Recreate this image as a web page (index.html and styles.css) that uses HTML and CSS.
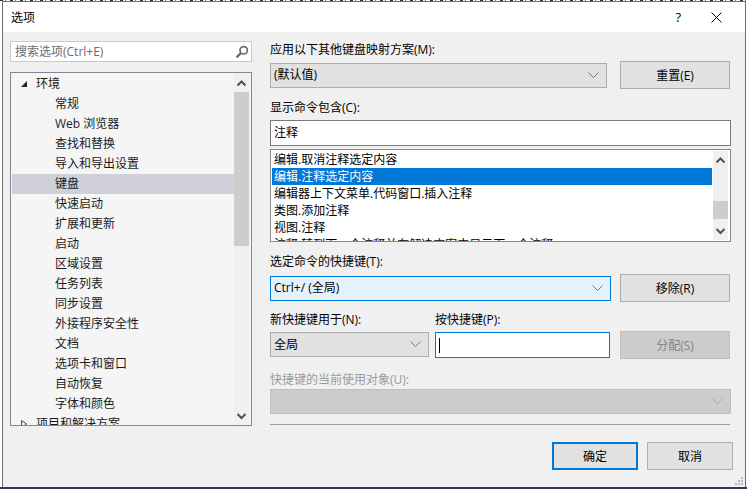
FILE: index.html
```html
<!DOCTYPE html>
<html lang="zh-CN">
<head>
<meta charset="utf-8">
<title>选项</title>
<link rel="stylesheet" href="styles.css">
</head>
<body>
<div class="desktop">
  <div class="dialog">
    <header class="titlebar">
      <span class="title">选项</span>
      <span class="help">?</span>
      <svg class="close" width="11" height="11" viewBox="0 0 11 11"><path d="M.5.5l10 10M10.5.5l-10 10" stroke="#000" fill="none"/></svg>
    </header>
    <div class="content">
      <aside class="side">
        <div class="search">
          <span class="search-text">搜索选项(Ctrl+E)</span>
          <svg class="search-icon" width="14" height="14" viewBox="0 0 14 14"><circle cx="8.7" cy="5.3" r="3.7" fill="none" stroke="#6a6a6a" stroke-width="1.7"/><path d="M6 8L1.6 12.4" stroke="#6a6a6a" stroke-width="2.4" fill="none"/></svg>
        </div>
        <div class="tree">
          <ul class="tree-list">
            <li class="node parent"><svg class="twist" width="6" height="6" viewBox="0 0 6 6"><path d="M6 0v6H0z" fill="#222"/></svg>环境</li>
            <li class="node">常规</li>
            <li class="node">Web 浏览器</li>
            <li class="node">查找和替换</li>
            <li class="node">导入和导出设置</li>
            <li class="node selected">键盘</li>
            <li class="node">快速启动</li>
            <li class="node">扩展和更新</li>
            <li class="node">启动</li>
            <li class="node">区域设置</li>
            <li class="node">任务列表</li>
            <li class="node">同步设置</li>
            <li class="node">外接程序安全性</li>
            <li class="node">文档</li>
            <li class="node">选项卡和窗口</li>
            <li class="node">自动恢复</li>
            <li class="node">字体和颜色</li>
            <li class="node parent"><svg class="twist" width="6" height="8" viewBox="0 0 6 8"><path d="M.5.5l5 3.5-5 3.500z" fill="none" stroke="#444"/></svg>项目和解决方案</li>
          </ul>
          <div class="scrollbar tree-scroll">
            <svg class="arrow" width="15" height="18" viewBox="0 0 15 18"><path d="M3.500 11.500l4-4 4 4" fill="none" stroke="#505050" stroke-width="2"/></svg>
            <div class="thumb tree-thumb"></div>
            <div class="track"></div>
            <svg class="arrow" width="15" height="18" viewBox="0 0 15 18"><path d="M3.500 7l4 4 4-4" fill="none" stroke="#505050" stroke-width="2"/></svg>
          </div>
        </div>
      </aside>
      <main class="panel">
        <label class="label first">应用以下其他键盘映射方案(M):</label>
        <div class="row">
          <div class="combo grow">(默认值)<svg class="chev" width="11" height="6" viewBox="0 0 11 6"><path d="M.5.500l5 5 5-5" fill="none" stroke="#777"/></svg></div>
          <button class="btn action">重置(E)</button>
        </div>
        <label class="label second">显示命令包含(C):</label>
        <div class="textbox">注释</div>
        <div class="cmdlist">
          <ul class="cmd-rows">
            <li class="cmd">编辑.取消注释选定内容</li>
            <li class="cmd active">编辑.注释选定内容</li>
            <li class="cmd">编辑器上下文菜单.代码窗口.插入注释</li>
            <li class="cmd">类图.添加注释</li>
            <li class="cmd">视图.注释</li>
            <li class="cmd">注释.转到下一个注释并在解决方案中显示下一个注释</li>
          </ul>
          <div class="scrollbar list-scroll">
            <svg class="arrow" width="15" height="18" viewBox="0 0 15 18"><path d="M3.500 11.500l4-4 4 4" fill="none" stroke="#505050" stroke-width="2"/></svg>
            <div class="track upper"></div>
            <div class="thumb list-thumb"></div>
            <div class="track"></div>
            <svg class="arrow" width="15" height="18" viewBox="0 0 15 18"><path d="M3.500 7l4 4 4-4" fill="none" stroke="#505050" stroke-width="2"/></svg>
          </div>
        </div>
        <label class="label third">选定命令的快捷键(T):</label>
        <div class="row">
          <div class="combo grow focus">Ctrl+/ (全局)<svg class="chev" width="11" height="6" viewBox="0 0 11 6"><path d="M.5.500l5 5 5-5" fill="none" stroke="#777"/></svg></div>
          <button class="btn action">移除(R)</button>
        </div>
        <div class="fields">
          <div class="field scope">
            <label class="label">新快捷键用于(N):</label>
            <div class="combo">全局<svg class="chev" width="11" height="6" viewBox="0 0 11 6"><path d="M.5.500l5 5 5-5" fill="none" stroke="#777"/></svg></div>
          </div>
          <div class="field keys">
            <label class="label">按快捷键(P):</label>
            <div class="keybox"><span class="caret"></span></div>
          </div>
          <button class="btn action off">分配(S)</button>
        </div>
        <label class="label muted">快捷键的当前使用对象(U):</label>
        <div class="combo disabled"><svg class="chev" width="11" height="6" viewBox="0 0 11 6"><path d="M.5.500l5 5 5-5" fill="none" stroke="#aaa"/></svg></div>
        <hr class="rule">
        <footer class="footer">
          <button class="btn wide primary">确定</button>
          <button class="btn wide">取消</button>
        </footer>
      </main>
      <svg class="grip" width="9" height="9" viewBox="0 0 9 9"><path d="M7 0h2v2H7zM4 3h2v2H4zM7 3h2v2H7zM1 6h2v2H1zM4 6h2v2H4zM7 6h2v2H7z" fill="#b8b8b8"/></svg>
    </div>
  </div>
</div>
</body>
</html>
```
FILE: styles.css
```css
* { box-sizing: border-box; }
html, body { margin: 0; padding: 0; }
body {
  width: 747px; height: 489px; overflow: hidden;
  font: 12px/17px "Open Sans", "Noto Sans CJK SC", sans-serif;
  color: #000;
}
ul { list-style: none; margin: 0; padding: 0; }
.desktop {
  height: 489px; padding: 1px 1px 2px 2px;
  background:
    repeating-linear-gradient(90deg, #333 0 3px, #fff 3px 5px, #a67c45 5px 6px, #fff 6px 10px) 0 0 / 100% 1px no-repeat,
    linear-gradient(#fff 0 487px, #2b3a50 487px);
}
.dialog {
  height: 486px; display: flex; flex-direction: column;
  border: 1px solid #6f6f6f; border-bottom: 0;
  background: #f0f0f0;
}
.titlebar {
  height: 30px; flex: none; background: #fff;
  display: flex; align-items: center; padding: 0 23px 0 8px;
}
.title { flex: 1; }
.help { font-size: 13px; margin-right: 30px; }
.close { flex: none; }
.content { flex: 1; display: flex; padding: 9px 0 0 7px; position: relative; }
.side { width: 242px; flex: none; }
.search {
  height: 21px; background: #fff; border: 1px solid #c9c9d6;
  display: flex; align-items: center; justify-content: space-between;
  padding: 0 2px 0 4px; color: #6d6d6d;
}
.tree {
  height: 354px; margin-top: 10px; display: flex;
  border: 1px solid #868695; background: #f5f5f5;
  padding: 1px 2px 0 1px; overflow: hidden;
}
.tree-list { flex: 1; min-width: 0; overflow: hidden; }
.node { height: 20px; line-height: 20px; padding-left: 43px; white-space: nowrap; color: #1a1a1a; }
.node.parent { padding-left: 9px; display: flex; align-items: center; }
.node.selected { background: #d0d0d8; }
.twist { flex: none; margin-right: 9px; }
.scrollbar { width: 15px; flex: none; display: flex; flex-direction: column; background: #f0f0f0; }
.arrow { flex: none; display: block; }
.thumb { background: #cdcdcd; flex: none; }
.track { flex: 1; }
.tree-thumb { height: 154px; }
.panel { width: 461px; margin-left: 18px; flex: none; }
.label { display: block; height: 17px; white-space: nowrap; }
.label.first { margin-top: 0; height: 20px; }
.label.second { margin-top: 10px; height: 21px; line-height: 17px; }
.label.third { margin-top: 11px; height: 21px; }
.row { display: flex; align-items: center; width: 460px; gap: 9px; }
.row .combo.grow:not(.focus) { margin-right: 4px; }
.grow { flex: 1; }
.combo {
  height: 25px; display: flex; align-items: center; justify-content: space-between;
  padding: 0 7px 1px 3px;
  background: #e1e1e1; border: 1px solid #adadad;
}
.combo.focus { background: #e5f1fb; border-color: #0078d7; }
.combo.disabled { background: #cccccc; border-color: #bfbfbf; justify-content: flex-end; }
.btn {
  font: inherit; color: inherit; height: 28px; padding: 0;
  background: #e1e1e1; border: 1px solid #adadad;
}
.action { width: 110px; flex: none; }
.off { background: #cccccc; border-color: #bfbfbf; color: #838383; }
.textbox {
  height: 26px; background: #fff; border: 1px solid #7a7a7a;
  padding: 0 3px; line-height: 24px;
}
.cmdlist {
  height: 93px; margin-top: 3px; display: flex; overflow: hidden;
  background: #fff; border: 1px solid #828790; padding: 1px 2px 0 1px;
}
.cmd-rows { flex: 1; min-width: 0; overflow: hidden; margin-right: 1px; }
.cmd { height: 17px; padding-left: 2px; white-space: nowrap; overflow: hidden; }
.cmd.active { background: #0078d7; color: #fff; }
.list-scroll { height: 89px; }
.track.upper { flex: none; height: 32px; }
.list-thumb { height: 18px; }
.fields { display: flex; align-items: flex-start; margin-top: 10px; }
.field.scope { width: 159px; margin-right: 6px; }
.field.keys { width: 175px; margin-right: 10px; }
.field .label { height: 20px; line-height: 15px; }
.keybox {
  height: 26px; background: #fff; border: 1px solid #0078d7;
  display: flex; align-items: center; padding-left: 3px;
}
.caret { width: 1px; height: 15px; background: #000; }
.fields .off { margin-top: 19px; }
.label.muted { color: #9a9a9a; margin-top: 12px; height: 18px; }
.rule { margin: 10px 1px 0 0; height: 1px; border: 0; background: #a0a0a0; }
.footer { display: flex; justify-content: flex-end; gap: 9px; width: 463px; margin-top: 17px; }
.wide { width: 86px; }
.primary { border: 2px solid #0078d7; }
.grip { position: absolute; right: 2px; bottom: 1px; }
```
